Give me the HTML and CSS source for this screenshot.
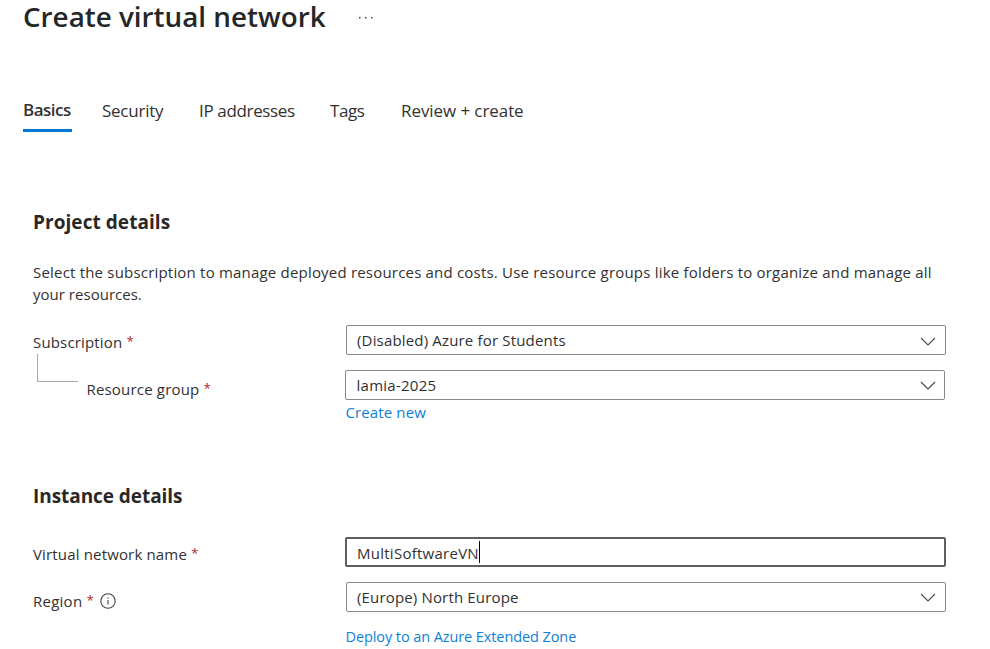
FILE: index.html
```html
<!DOCTYPE html>
<html lang="en"><head><meta charset="utf-8"><title>Create virtual network</title><link rel="stylesheet" href="styles.css"></head>
<body>
<header class="title"><h1>Create virtual network</h1><svg class="dots" width="16" height="4" viewBox="0 0 16 4"><path d="M1 1h1.5v1.5H1zM7 1h1.5v1.5H7zM13 1h1.5v1.5H13z"/></svg></header>
<nav class="tabs"><a class="tab active">Basics</a><a class="tab security">Security</a><a class="tab ip">IP addresses</a><a class="tab tags">Tags</a><a class="tab review">Review + create</a></nav>
<main>
<section class="project"><h2 class="ph">Project details</h2>
<p><span class="l1">Select the subscription to manage deployed resources and costs. Use resource groups like folders to organize and manage all</span><br><span class="l2">your resources.</span></p>
<div class="row"><label class="sub">Subscription <b>*</b></label><div class="field"><span class="v1">(Disabled) Azure for Students</span><svg class="chev low" width="16" height="9" viewBox="0 0 16 9"><path d="M1 1l7 7 7-7"/></svg></div></div>
<div class="row rg"><div class="branch"></div><label class="group">Resource group <b>*</b></label><div class="field"><span class="v2">lamia-2025</span><svg class="chev" width="16" height="9" viewBox="0 0 16 9"><path d="M1 1l7 7 7-7"/></svg></div></div>
<a class="link new">Create new</a></section>
<section class="instance"><h2 class="ih">Instance details</h2>
<div class="row name"><label class="vn">Virtual network name <b>*</b></label><div class="field focus"><span class="v3">MultiSoftwareVN</span><i class="caret"></i></div></div>
<div class="row region"><label class="reg">Region <b>*</b></label><svg class="info" width="16" height="16" viewBox="0 0 16 16"><circle cx="8" cy="8" r="7.2"/><path d="M8 7v4.5M8 4.5v1.3"/></svg><div class="field"><span class="v4">(Europe) North Europe</span><svg class="chev" width="16" height="9" viewBox="0 0 16 9"><path d="M1 1l7 7 7-7"/></svg></div></div>
<a class="link zone">Deploy to an Azure Extended Zone</a></section>
</main></body></html>
```
FILE: styles.css
```css
*{box-sizing:border-box}
body{margin:0;width:990px;height:649px;overflow:hidden;background:#fff;color:#323130;font:15px/22px "Segoe UI","Open Sans","Noto Sans",sans-serif}
h1,h2,p{margin:0}
.title{display:flex;height:34px;padding-left:23px}
h1{width:335px;font-size:27.8px;line-height:32px;font-weight:600;white-space:nowrap;color:#242628}
.dots{margin-top:16px;fill:#444}
.tabs{display:flex;margin-top:64px;padding-left:23px;height:34px;font-size:17px;line-height:25px;white-space:nowrap}
.active{width:49px;font-weight:600;line-height:24px;letter-spacing:-.5px;border-bottom:3px solid #0078d4;margin-right:30px}
.security{width:97px;letter-spacing:-.25px}
.ip{width:131px;letter-spacing:-.35px}
.tags{width:71px;letter-spacing:-.4px}
.review{letter-spacing:-.08px}
main{padding-left:33px}
.project{padding-top:77px}
h2{font-size:19px;line-height:26px;font-weight:700;color:#292827}
.ph{letter-spacing:.06px}
.ih{letter-spacing:-.06px}
p{margin-top:26px;height:45px;white-space:nowrap}
.l1{letter-spacing:.197px}
.l2{letter-spacing:.02px}
.row{display:flex;height:30px;margin-top:19px;align-items:center}
.row.rg,.row.region{margin-top:15px}
label{flex:none;width:313px;white-space:nowrap;padding-top:4px;letter-spacing:.16px}
label b{font-weight:400;font-size:13.5px;line-height:1;color:#b3262c;position:relative;top:-2px}
.field{flex:none;width:600px;height:30px;border:1px solid #8a8886;border-radius:2px;display:flex;align-items:center;padding:0 9px 0 10px;white-space:nowrap}
.chev{margin-left:auto;fill:none;stroke:#494745;stroke-width:1.1}
.low{position:relative;top:1px}
.v1{letter-spacing:.17px}
.v2{letter-spacing:.26px}
.v3{letter-spacing:.26px;padding-top:1px}
.v4{letter-spacing:.16px}
.rg .field{padding:0 8px 0 10.5px}
.branch{flex:none;width:41px;height:28px;border:solid #aaa;border-width:0 0 1px 1px;margin:-34px 8.5px 0 4px}
.group{width:258.5px;padding-top:8px;letter-spacing:.18px}
.link{display:block;margin-left:312.5px;color:#0f7fd7;white-space:nowrap}
.new{margin-top:1px;letter-spacing:.12px}
.instance{padding-top:60px}
.name{margin-top:28px}
.vn{width:312px}
.name .field{width:601px}
.focus{border:2px solid #605e5c}
.caret{width:1px;height:22px;background:#000}
.reg{width:67px;padding-top:8px;letter-spacing:.25px}
.info{flex:none;margin:8px 230px 0 0;fill:none;stroke:#444;stroke-width:1.1}
.zone{margin-top:14px;font-size:14.5px;letter-spacing:-.09px}
```
